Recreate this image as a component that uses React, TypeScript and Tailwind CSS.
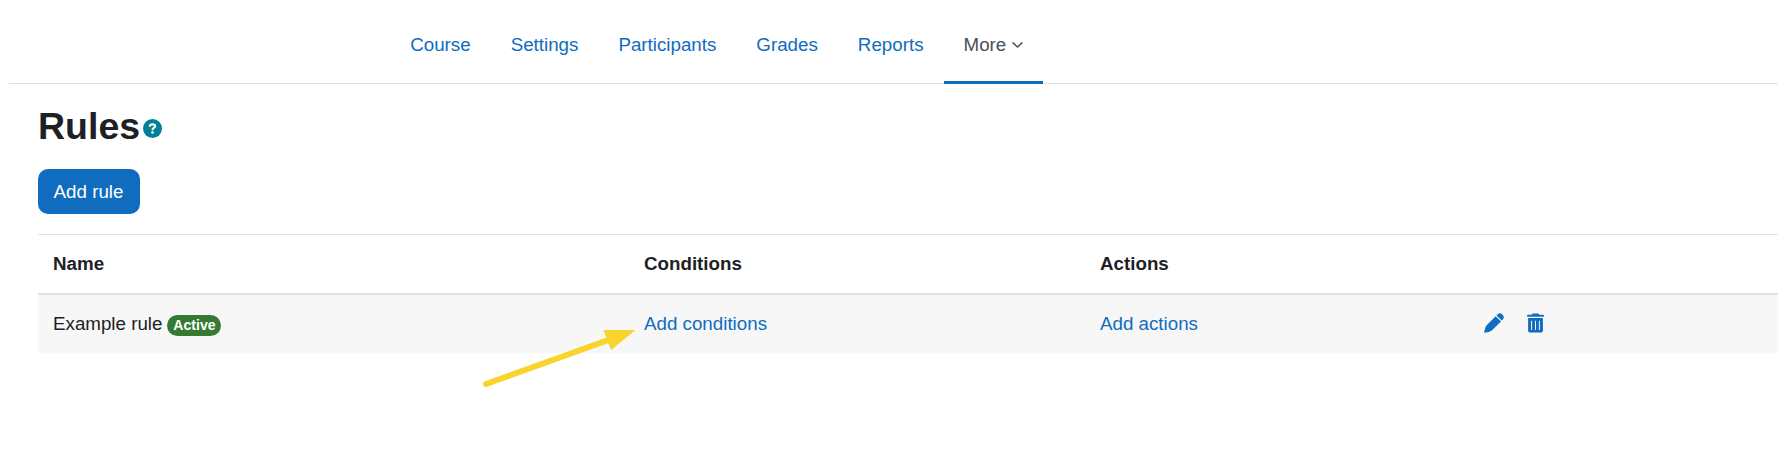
const links = ["Course", "Settings", "Participants", "Grades", "Reports"];

const headCell = "border-t border-b-2 border-[#dee2e6] px-[15px]";

function HelpIcon() {
  return (
    <svg className="mt-[3px] ml-[3px] size-[19px]" viewBox="0 0 19 19" fill="none">
      <circle cx="9.5" cy="9.5" r="9.5" fill="#008196" />
      <path d="M6.9 6.9C7 5.8 7.8 5.4 9.5 5.4 11.2 5.4 12.2 6 12.2 7.3 12.2 8.8 9.5 8.9 9.5 10.5" stroke="#fff" strokeWidth="2.1" strokeLinecap="round" strokeLinejoin="round" />
      <circle cx="9.5" cy="13.5" r="1.3" fill="#fff" />
    </svg>
  );
}

function PenIcon() {
  return (
    <svg className="size-[20px]" viewBox="0 0 20 20" fill="currentColor">
      <path d="M11.7 3.2 17 8.5 8 17.2Q6.6 18.4 4.8 18.9L0.9 19.8Q0 19.9 0.2 19L1.1 15.3Q1.5 13.6 2.7 12.2Z" />
      <path d="M12.6 2.4 13.8 1.2Q16 -0.6 17.8 1L19 2.3Q20.5 4.2 18.9 6.2L17.8 7.5Z" />
    </svg>
  );
}

function TrashIcon() {
  return (
    <svg className="h-[20px] w-[17px]" viewBox="0 0 17 20" fill="currentColor">
      <path d="M5.6 0.5H11.4L12.4 1.7H16.2Q17 1.8 17 2.7 17 3.6 16.2 3.7H0.8Q0 3.6 0 2.7 0 1.8 0.8 1.7H4.6Z" />
      <path fillRule="evenodd" d="M1.1 5H15.9V17.8Q15.9 19.6 14.2 19.6H2.8Q1.1 19.6 1.1 17.8ZM4.1 7.8V17H5.1V7.8ZM8 7.8V17H9V7.8ZM11.9 7.8V17H12.9V7.8Z" />
    </svg>
  );
}

export default function App() {
  return (
    <div className="h-[457px] w-full overflow-hidden bg-white font-['Liberation_Sans',Arial,sans-serif] text-[18.75px] leading-[28px] text-[#1d2125]">
      <nav className="ml-[9px] flex h-[84px] border-b border-[#dee2e6] pl-[381.2px]">
        {links.map((label) => (
          <a key={label} href="#" className="flex h-[84px] items-center px-5 pt-[6px] text-[#0f6cbf]">
            {label}
          </a>
        ))}
        <a href="#" className="flex h-[84px] w-[99px] items-center border-b-3 border-[#0f6cbf] px-5 pt-[9px] text-[#495057]">
          More
          <svg className="ml-[5.4px] h-[6px] w-[11px] shrink-0" viewBox="0 0 11 6" fill="none" stroke="currentColor" strokeWidth="1.5" strokeLinecap="round" strokeLinejoin="round">
            <path d="M1 0.9 5.5 5 10 0.9" />
          </svg>
        </a>
      </nav>
      <main className="pl-[38px]">
        <header className="flex h-[85px] items-center">
          <h1 className="text-[37.5px] leading-[45px] font-bold">Rules</h1>
          <HelpIcon />
        </header>
        <button className="h-[45px] w-[102px] rounded-[10px] bg-[#0f6cbf] pr-px text-white">Add rule</button>
        <table className="mt-5 w-full table-fixed border-separate border-spacing-0">
          <colgroup>
            <col className="w-[591px]" />
            <col className="w-[456px]" />
            <col className="w-[384px]" />
            <col />
          </colgroup>
          <thead>
            <tr className="h-[61px] text-left">
              <th className={headCell}>Name</th>
              <th className={headCell}>Conditions</th>
              <th className={headCell}>Actions</th>
              <th className={headCell} />
            </tr>
          </thead>
          <tbody>
            <tr className="h-[58px] bg-[#f7f7f7]">
              <td className="px-[15px]">
                <div className="flex items-center">
                  Example rule
                  <span className="mt-[3px] ml-[5px] flex h-[21px] w-[54px] items-center justify-center rounded-full bg-[#357a32] pb-px text-[14.06px] leading-[14px] font-bold text-white">
                    Active
                  </span>
                </div>
              </td>
              <td className="relative px-[15px]">
                <a href="#" className="text-[#0f6cbf]">Add conditions</a>
                <svg className="absolute top-[33px] left-[-149px] h-[62px] w-[156px]" viewBox="0 0 156 62">
                  <path d="M6 56 129 11.7" stroke="#f8d42d" strokeWidth="6" strokeLinecap="round" />
                  <path d="M123.5 2H155.5L131 22Z" fill="#f8d42d" />
                </svg>
              </td>
              <td className="px-[15px]">
                <a href="#" className="text-[#0f6cbf]">Add actions</a>
              </td>
              <td className="px-[15px]">
                <div className="flex items-center gap-[23px] pb-[2px] text-[#0f6cbf]">
                  <PenIcon />
                  <TrashIcon />
                </div>
              </td>
            </tr>
          </tbody>
        </table>
      </main>
    </div>
  );
}
